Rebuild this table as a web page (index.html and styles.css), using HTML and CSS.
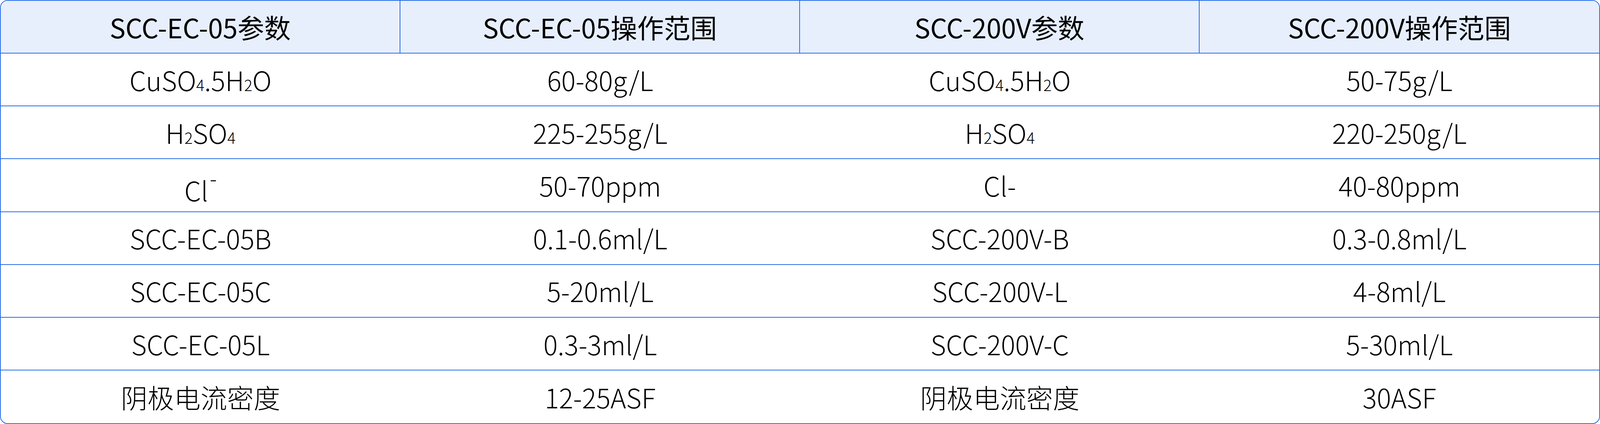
FILE: index.html
```html
<!DOCTYPE html>
<html lang="zh-CN">
<head>
<meta charset="utf-8">
<title>SCC 参数</title>
<link rel="stylesheet" href="styles.css">
</head>
<body>
<div class="table">
  <div class="row head">
    <div class="cell"><span>SCC-EC-05参数</span></div>
    <div class="cell"><span>SCC-EC-05操作范围</span></div>
    <div class="cell"><span>SCC-200V参数</span></div>
    <div class="cell"><span>SCC-200V操作范围</span></div>
  </div>
  <div class="row">
    <div class="cell"><span>CuSO<span class="sm">4</span>.5H<span class="sm">2</span>O</span></div>
    <div class="cell"><span>60-80g/L</span></div>
    <div class="cell"><span>CuSO<span class="sm">4</span>.5H<span class="sm">2</span>O</span></div>
    <div class="cell"><span>50-75g/L</span></div>
  </div>
  <div class="row">
    <div class="cell"><span>H<span class="sm">2</span>SO<span class="sm">4</span></span></div>
    <div class="cell"><span>225-255g/L</span></div>
    <div class="cell"><span>H<span class="sm">2</span>SO<span class="sm">4</span></span></div>
    <div class="cell"><span>220-250g/L</span></div>
  </div>
  <div class="row">
    <div class="cell"><span>Cl<span class="sup">-</span></span></div>
    <div class="cell"><span>50-70ppm</span></div>
    <div class="cell"><span>Cl-</span></div>
    <div class="cell"><span>40-80ppm</span></div>
  </div>
  <div class="row">
    <div class="cell"><span>SCC-EC-05B</span></div>
    <div class="cell"><span>0.1-0.6ml/L</span></div>
    <div class="cell"><span>SCC-200V-B</span></div>
    <div class="cell"><span>0.3-0.8ml/L</span></div>
  </div>
  <div class="row">
    <div class="cell"><span>SCC-EC-05C</span></div>
    <div class="cell"><span>5-20ml/L</span></div>
    <div class="cell"><span>SCC-200V-L</span></div>
    <div class="cell"><span>4-8ml/L</span></div>
  </div>
  <div class="row">
    <div class="cell"><span>SCC-EC-05L</span></div>
    <div class="cell"><span>0.3-3ml/L</span></div>
    <div class="cell"><span>SCC-200V-C</span></div>
    <div class="cell"><span>5-30ml/L</span></div>
  </div>
  <div class="row">
    <div class="cell"><span>阴极电流密度</span></div>
    <div class="cell"><span>12-25ASF</span></div>
    <div class="cell"><span>阴极电流密度</span></div>
    <div class="cell"><span>30ASF</span></div>
  </div>
</div>
</body>
</html>
```

FILE: styles.css
```css
html, body {
  margin: 0;
  padding: 0;
  background: #ffffff;
}

body {
  font-family: "Noto Sans CJK SC", "Noto Sans", sans-serif;
  color: #000000;
}

.table {
  box-sizing: border-box;
  width: 100%;
  height: 1085px;
  border: 2px solid #2a6ee6;
  border-radius: 20px;
  overflow: hidden;
  display: grid;
  grid-template-rows: repeat(8, 1fr);
}

.row {
  display: grid;
  grid-template-columns: repeat(4, minmax(0, 1fr));
  border-bottom: 2px solid #2a6ee6;
}

.row:last-child {
  border-bottom: none;
}

.cell {
  display: flex;
  align-items: center;
  justify-content: center;
  font-size: 68px;
  font-weight: 300;
  white-space: nowrap;
  line-height: 1.2;
}

.head {
  background: #e7effd;
}

.head .cell {
  font-weight: 400;
  border-right: 2px solid #2a6ee6;
}

.head .cell:last-child {
  border-right: none;
}

.sm {
  font-size: 0.58em;
}

.sup {
  font-size: 0.8em;
  vertical-align: 0.68em;
  margin-left: 0.08em;
}
```
